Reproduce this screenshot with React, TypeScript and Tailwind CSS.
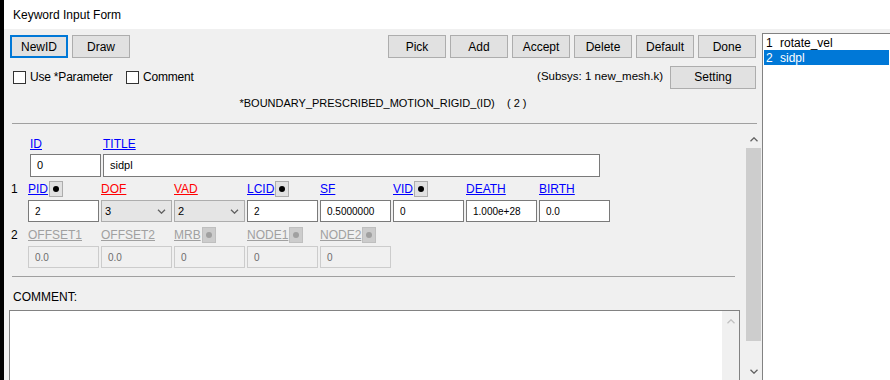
import React from 'react';

const ARIAL = "font-['Liberation_Sans',Arial,sans-serif]";

const Button: React.FC<{ label: string; className?: string; focused?: boolean }> = ({ label, className = '', focused }) => (
  <div
    className={`h-[23px] flex items-center justify-center text-[12px] text-[#000] bg-[#e1e1e1] ${
      focused ? 'border-2 border-[#0078d7]' : 'border border-[#adadad]'
    } ${className}`}
  >
    {label}
  </div>
);

const Checkbox: React.FC<{ label: string }> = ({ label }) => (
  <div className="flex items-center gap-[4px]">
    <div className="w-[13px] h-[13px] border border-[#333] bg-white" />
    <span className="text-[12px] tracking-[-0.2px]">{label}</span>
  </div>
);

const DotBtn: React.FC<{ disabled?: boolean }> = ({ disabled }) => (
  <div
    className={`ml-[1px] w-[14px] h-[16px] flex items-center justify-center border ${
      disabled ? 'bg-[#cccccc] border-[#bfbfbf]' : 'bg-[#e1e1e1] border-[#adadad]'
    }`}
  >
    <div className={`w-[6px] h-[6px] rounded-full ${disabled ? 'bg-[#a0a0a0]' : 'bg-black'}`} />
  </div>
);

type Field = { label: string; color: 'blue' | 'red' | 'gray'; dot?: boolean; value: string; kind?: 'select' };

const labelColor = {
  blue: 'text-[#0000ff]',
  red: 'text-[#ff0000]',
  gray: 'text-[#a0a0a0]',
};

const Chevron: React.FC<{ down?: boolean; color?: string; w?: number }> = ({ down, color = '#606060', w = 8 }) => (
  <svg width={w} height={5} viewBox="0 0 8 5">
    <path
      d={down ? 'M0.5 0.8 L4 4.2 L7.5 0.8' : 'M0.5 4.2 L4 0.8 L7.5 4.2'}
      stroke={color}
      strokeWidth={1.3}
      fill="none"
    />
  </svg>
);

const row1: Field[] = [
  { label: 'PID', color: 'blue', dot: true, value: '2' },
  { label: 'DOF', color: 'red', value: '3', kind: 'select' },
  { label: 'VAD', color: 'red', value: '2', kind: 'select' },
  { label: 'LCID', color: 'blue', dot: true, value: '2' },
  { label: 'SF', color: 'blue', value: '0.5000000' },
  { label: 'VID', color: 'blue', dot: true, value: '0' },
  { label: 'DEATH', color: 'blue', value: '1.000e+28' },
  { label: 'BIRTH', color: 'blue', value: '0.0' },
];

const row2: Field[] = [
  { label: 'OFFSET1', color: 'gray', value: '0.0' },
  { label: 'OFFSET2', color: 'gray', value: '0.0' },
  { label: 'MRB', color: 'gray', dot: true, value: '0' },
  { label: 'NODE1', color: 'gray', dot: true, value: '0' },
  { label: 'NODE2', color: 'gray', dot: true, value: '0' },
];

const CardRow: React.FC<{ num: string; fields: Field[]; disabled?: boolean }> = ({ num, fields, disabled }) => (
  <div className="flex">
    <div className="w-[24px] pl-[7px] h-[16px] flex items-center text-[12px]">{num}</div>
    <div className="flex flex-col gap-[3px]">
      <div className="flex gap-[2px] h-[16px]">
        {fields.map((f) => (
          <div key={f.label} className="w-[71px] flex items-center">
            <span className={`underline text-[12px] leading-[14px] ${labelColor[f.color]}`}>{f.label}</span>
            {f.dot && <DotBtn disabled={disabled} />}
          </div>
        ))}
      </div>
      <div className="flex gap-[2px]">
        {fields.map((f) =>
          f.kind === 'select' ? (
            <div
              key={f.label}
              className="w-[71px] h-[22px] bg-[#e5e5e5] border border-[#adadad] flex items-center justify-between pl-[3px] pr-[5px] text-[11px]"
            >
              <span>{f.value}</span>
              <Chevron down w={9} />
            </div>
          ) : (
            <div
              key={f.label}
              className={`w-[71px] h-[22px] flex items-center pl-[6px] text-[10px] border ${
                disabled ? 'bg-[#f0f0f0] border-[#cccccc] text-[#6d6d6d]' : 'bg-white border-[#7a7a7a] text-black'
              }`}
            >
              {f.value}
            </div>
          )
        )}
      </div>
    </div>
  </div>
);

const App: React.FC = () => {
  return (
    <div className={`w-[890px] h-[380px] flex overflow-hidden bg-white text-black ${ARIAL}`}>
      {/* window edge */}
      <div className="w-[4px] bg-black shrink-0" />

      <div className="flex-1 flex flex-col min-w-0">
        {/* title bar */}
        <div className="h-[29px] shrink-0 bg-white flex items-center pl-[9px] text-[12px]">Keyword Input Form</div>

        <div className="flex-1 flex bg-[#f0f0f0] min-h-0">
          {/* form side */}
          <div className="w-[758px] shrink-0 flex flex-col">
            {/* toolbar */}
            <div className="mt-[6px] flex items-center pl-[6px] pr-[6px]">
              <Button label="NewID" focused className="w-[58px]" />
              <Button label="Draw" className="w-[58px] ml-[4px]" />
              <div className="flex-1" />
              <div className="flex gap-[4px]">
                {['Pick', 'Add', 'Accept', 'Delete', 'Default', 'Done'].map((b) => (
                  <Button key={b} label={b} className="w-[58px]" />
                ))}
              </div>
            </div>

            <div className="mt-[8px] h-[22px] flex items-center pl-[9px] pr-[6px]">
              <div className="w-[113px]">
                <Checkbox label="Use *Parameter" />
              </div>
              <Checkbox label="Comment" />
              <div className="flex-1" />
              <span className="text-[11.5px]">(Subsys: 1 new_mesh.k)</span>
              <Button label="Setting" className="w-[86px] ml-[7px] h-[22px]" />
            </div>

            <div className="mt-[7px] h-[16px] flex items-center justify-center text-[11px] whitespace-pre">
              {'*BOUNDARY_PRESCRIBED_MOTION_RIGID_(ID)    ( 2 )'}
            </div>

            <div className="mt-[12px] ml-[8px] mr-[5px] h-px bg-[#a0a0a0]" />

            {/* scroll area */}
            <div className="mt-[7px] flex-1 flex min-h-0">
              <div className="w-[738px] flex flex-col overflow-hidden">
                <div className="mt-[6px] flex gap-[2px] h-[16px] pl-[26px]">
                  <div className="w-[71px] flex items-center">
                    <span className="underline text-[12px] leading-[14px] text-[#0000ff]">ID</span>
                  </div>
                  <div className="flex items-center">
                    <span className="underline text-[12px] leading-[14px] text-[#0000ff]">TITLE</span>
                  </div>
                </div>
                <div className="mt-[3px] flex gap-[2px] pl-[26px]">
                  <div className="w-[71px] h-[23px] bg-white border border-[#7a7a7a] flex items-center pl-[6px] text-[11px]">0</div>
                  <div className="w-[497px] h-[23px] bg-white border border-[#7a7a7a] flex items-center pl-[6px] text-[11px]">sidpl</div>
                </div>

                <div className="mt-[4px]">
                  <CardRow num="1" fields={row1} />
                </div>
                <div className="mt-[5px]">
                  <CardRow num="2" fields={row2} disabled />
                </div>

                <div className="mt-[8px] ml-[8px] w-[723px] h-px bg-[#a0a0a0] shrink-0" />

                <div className="mt-[12px] h-[16px] flex items-center pl-[9px] text-[12px]">COMMENT:</div>

                <div className="mt-[5px] ml-[5px] w-[731px] flex-1 bg-white border-l border-t border-r border-[#828282] flex justify-end min-h-[80px]">
                  <div className="w-[17px] bg-[#f0f0f0] flex justify-center pt-[8px]">
                    <Chevron color="#c0c0c0" />
                  </div>
                </div>
              </div>

              {/* vertical scrollbar */}
              <div className="w-[15px] ml-[4px] flex flex-col bg-[#f0f0f0]">
                <div className="h-[17px] flex items-center justify-center">
                  <Chevron />
                </div>
                <div className="h-[193px] bg-[#cdcdcd]" />
                <div className="flex-1" />
                <div className="h-[17px] flex items-center justify-center">
                  <Chevron down />
                </div>
              </div>
            </div>
          </div>

          {/* keyword list */}
          <div className="flex-1 mt-[4px] bg-white border-l border-t border-[#828282] p-[1px] text-[12px]">
            <div className="h-[15px] flex items-center">
              <span className="w-[16px] pl-[2px]">1</span>
              <span>rotate_vel</span>
            </div>
            <div className="h-[15px] flex items-center bg-[#0078d7] text-white">
              <span className="w-[16px] pl-[2px]">2</span>
              <span>sidpl</span>
            </div>
          </div>
        </div>
      </div>
    </div>
  );
};

export default App;
